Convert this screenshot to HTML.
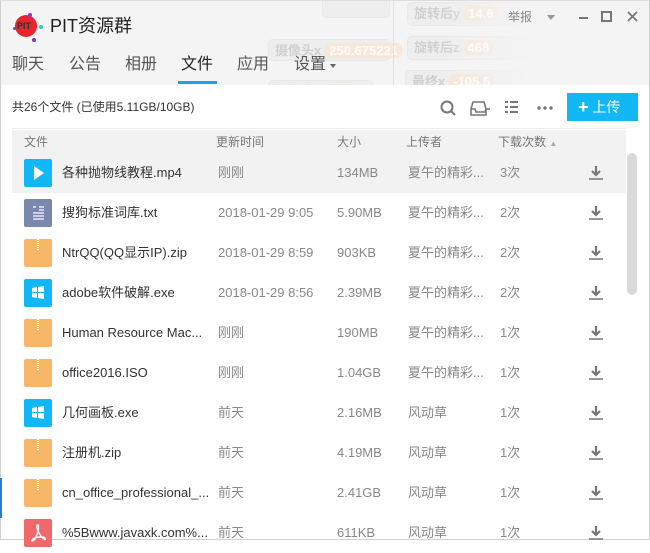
<!DOCTYPE html>
<html><head><meta charset="utf-8"><style>
*{margin:0;padding:0;box-sizing:border-box}
body{width:650px;height:540px;overflow:hidden;background:#fff;font-family:"Liberation Sans","Noto Sans CJK SC",sans-serif;position:relative}
.top{position:absolute;left:0;top:0;width:650px;height:85px;background:#f4f4f4;overflow:hidden}
.fb{position:absolute;background:#eeeeee;border:1px solid #e8e8e8;border-radius:5px;color:#d0d0d0;font-size:13px;font-weight:bold;padding:3px 6px;line-height:16px;white-space:nowrap}
.fb span{background:#f8e6d6;color:#fff;border-radius:6px;padding:0 4px;margin-left:4px}
.abs{position:absolute}
.tab{position:absolute;top:54px;font-size:16px;color:#555;line-height:22px}
.row{position:absolute;left:12px;width:614px;height:40px;font-size:13px;color:#888}
.row div{position:absolute;top:12px;white-space:nowrap;line-height:16px}
.row .ic{position:absolute;left:12px;top:6px;width:28px;height:28px;border-radius:2px}
.row svg.dl{position:absolute;left:576px;top:13px;width:16px;height:14px}
.zip{background:#f8b668}
.zip:after{content:"";position:absolute;left:13px;top:0;width:2px;height:12px;background:repeating-linear-gradient(#fff 0 1px,transparent 1px 2px)}
.nm{left:50px;color:#333}
.tm{left:206px}.sz{left:325px}.up{left:396px}.dc{left:488px}
</style></head><body>
<div class="top">
 <div class="fb" style="left:322px;top:-8px;width:68px;height:26px"></div>
 <div class="fb" style="left:268px;top:39px;width:122px;height:22px">摄像头x<span>250.675221</span></div>
 <div class="fb" style="left:268px;top:80px;width:105px;height:22px">摄像头y<span>370</span></div>
 <div class="fb" style="left:407px;top:2px;width:120px;height:24px">旋转后y<span>14.6</span></div>
 <div class="fb" style="left:407px;top:36px;width:120px;height:24px">旋转后z<span>468</span></div>
 <div class="fb" style="left:405px;top:70px;width:120px;height:24px">最终x<span>-105.5</span></div>
 <div class="abs" style="left:393px;top:0;width:1px;height:85px;background:#e2e2e2"></div>
 <div class="abs" style="left:440px;top:0;width:210px;height:85px;background:linear-gradient(90deg,rgba(244,244,244,0),#f4f4f4 45%)"></div>
</div>
<div class="abs" style="left:0;top:0;width:650px;height:540px;border:1px solid #cfcfcf;border-top-color:#ddd"></div>
<!-- logo -->
<div class="abs" style="left:15px;top:15px;width:22px;height:22px;border-radius:50%;background:#e8242c"></div>
<div class="abs" style="left:17px;top:21px;font-size:9px;font-weight:bold;color:#333;line-height:10px">PIT</div>
<div class="abs" style="left:28px;top:13px;width:4px;height:4px;border-radius:50%;background:#8a35d0"></div>
<div class="abs" style="left:39px;top:25px;width:4px;height:4px;border-radius:50%;background:#2ed0b0"></div>
<div class="abs" style="left:32px;top:38px;width:4px;height:4px;border-radius:50%;background:#7a3ac0"></div>
<div class="abs" style="left:13px;top:27px;width:3px;height:3px;border-radius:50%;background:#5050c0"></div>
<div class="abs" style="left:50px;top:15px;font-size:18px;color:#222;line-height:22px">PIT资源群</div>
<div class="abs" style="left:508px;top:9px;font-size:12px;color:#888;line-height:16px">举报</div>
<div class="abs" style="left:547px;top:15px;width:0;height:0;border:4px solid transparent;border-top:5px solid #999"></div>
<div class="abs" style="left:579px;top:17px;width:9px;height:2px;background:#777"></div>
<div class="abs" style="left:601px;top:11px;width:11px;height:11px;border:2px solid #777"></div>
<svg class="abs" style="left:627px;top:11px" width="11" height="11"><path d="M1 1l9 9M10 1l-9 9" stroke="#777" stroke-width="1.8"/></svg>
<div class="tab" style="left:12px">聊天</div>
<div class="tab" style="left:69px">公告</div>
<div class="tab" style="left:125px">相册</div>
<div class="tab" style="left:181px;color:#222">文件</div>
<div class="tab" style="left:237px">应用</div>
<div class="tab" style="left:294px">设置</div>
<div class="abs" style="left:330px;top:64px;border:3px solid transparent;border-top:4px solid #666"></div>
<div class="abs" style="left:178px;top:81px;width:39px;height:3px;background:#1aa3e8"></div>
<div class="abs" style="left:12px;top:99px;font-size:12px;color:#333;line-height:16px">共26个文件 (已使用5.11GB/10GB)</div>
<svg class="abs" style="left:438px;top:98px" width="130" height="20" viewBox="0 0 130 20">
 <circle cx="9" cy="9" r="5.5" fill="none" stroke="#777" stroke-width="2"/><path d="M13 13l4 4" stroke="#777" stroke-width="2"/>
 <path d="M35 4h11l2 7v6H33v-6z M33 11h4l1 3h9l1-3h4" fill="none" stroke="#777" stroke-width="1.6"/>
 <path d="M67 4h3M72 4h8M67 9h3M72 9h8M67 14h3M72 14h8" stroke="#777" stroke-width="2"/>
 <circle cx="101" cy="10" r="1.7" fill="#777"/><circle cx="107" cy="10" r="1.7" fill="#777"/><circle cx="113" cy="10" r="1.7" fill="#777"/>
</svg>
<div class="abs" style="left:567px;top:93px;width:71px;height:28px;background:#12b7f5;color:#fff;font-size:14px;line-height:28px;padding-left:11px"><b style="font-size:18px;vertical-align:-1px">+</b> 上传</div>
<div class="abs" style="left:12px;top:128px;width:614px;height:1px;background:#eee"></div>
<div class="abs" style="left:12px;top:130px;width:614px;height:23px;background:#f2f2f2;font-size:12px;color:#777;line-height:16px">
 <span class="abs" style="left:12px;top:4px">文件</span><span class="abs" style="left:204px;top:4px">更新时间</span><span class="abs" style="left:325px;top:4px">大小</span><span class="abs" style="left:394px;top:4px">上传者</span><span class="abs" style="left:486px;top:4px">下载次数 <span style="font-size:8px;color:#aaa">▲</span></span>
</div>
<div class="abs" style="left:627px;top:153px;width:10px;height:142px;border-radius:5px;background:#d9d9d9"></div>

<div class="row" style="top:153px;background:#f2f2f2"><div class="ic" style="background:#12b7f5"><svg width="28" height="28"><path d="M10 7l10 7-10 7z" fill="#fff"/></svg></div><div class="nm">各种抛物线教程.mp4</div><div class="tm">刚刚</div><div class="sz">134MB</div><div class="up">夏午的精彩...</div><div class="dc">3次</div><svg class="dl" viewBox="0 0 16 14"><path d="M8 0v8M4 5l4 4 4-4" stroke="#777" stroke-width="2.2" fill="none"/><path d="M1 13h14" stroke="#777" stroke-width="1.5"/></svg></div>
<div class="row" style="top:193px"><div class="ic" style="background:#7a88ad"><svg width="28" height="28"><path d="M9 8h3M15 8h5M15 11h5M9 14h11M9 17h11M9 20h11" stroke="#fff" stroke-width="1.3"/></svg></div><div class="nm">搜狗标准词库.txt</div><div class="tm">2018-01-29 9:05</div><div class="sz">5.90MB</div><div class="up">夏午的精彩...</div><div class="dc">2次</div><svg class="dl" viewBox="0 0 16 14"><path d="M8 0v8M4 5l4 4 4-4" stroke="#777" stroke-width="2.2" fill="none"/><path d="M1 13h14" stroke="#777" stroke-width="1.5"/></svg></div>
<div class="row" style="top:233px"><div class="ic zip"></div><div class="nm">NtrQQ(QQ显示IP).zip</div><div class="tm">2018-01-29 8:59</div><div class="sz">903KB</div><div class="up">夏午的精彩...</div><div class="dc">2次</div><svg class="dl" viewBox="0 0 16 14"><path d="M8 0v8M4 5l4 4 4-4" stroke="#777" stroke-width="2.2" fill="none"/><path d="M1 13h14" stroke="#777" stroke-width="1.5"/></svg></div>
<div class="row" style="top:273px"><div class="ic" style="background:#12b7f5"><svg width="28" height="28"><path d="M8 9l5-1v5H8zM14 8l6-1v6h-6zM8 14h5v5l-5-1zM14 14h6v6l-6-1z" fill="#fff"/></svg></div><div class="nm">adobe软件破解.exe</div><div class="tm">2018-01-29 8:56</div><div class="sz">2.39MB</div><div class="up">夏午的精彩...</div><div class="dc">2次</div><svg class="dl" viewBox="0 0 16 14"><path d="M8 0v8M4 5l4 4 4-4" stroke="#777" stroke-width="2.2" fill="none"/><path d="M1 13h14" stroke="#777" stroke-width="1.5"/></svg></div>
<div class="row" style="top:313px"><div class="ic zip"></div><div class="nm">Human Resource Mac...</div><div class="tm">刚刚</div><div class="sz">190MB</div><div class="up">夏午的精彩...</div><div class="dc">1次</div><svg class="dl" viewBox="0 0 16 14"><path d="M8 0v8M4 5l4 4 4-4" stroke="#777" stroke-width="2.2" fill="none"/><path d="M1 13h14" stroke="#777" stroke-width="1.5"/></svg></div>
<div class="row" style="top:353px"><div class="ic zip"></div><div class="nm">office2016.ISO</div><div class="tm">刚刚</div><div class="sz">1.04GB</div><div class="up">夏午的精彩...</div><div class="dc">1次</div><svg class="dl" viewBox="0 0 16 14"><path d="M8 0v8M4 5l4 4 4-4" stroke="#777" stroke-width="2.2" fill="none"/><path d="M1 13h14" stroke="#777" stroke-width="1.5"/></svg></div>
<div class="row" style="top:393px"><div class="ic" style="background:#12b7f5"><svg width="28" height="28"><path d="M8 9l5-1v5H8zM14 8l6-1v6h-6zM8 14h5v5l-5-1zM14 14h6v6l-6-1z" fill="#fff"/></svg></div><div class="nm">几何画板.exe</div><div class="tm">前天</div><div class="sz">2.16MB</div><div class="up">风动草</div><div class="dc">1次</div><svg class="dl" viewBox="0 0 16 14"><path d="M8 0v8M4 5l4 4 4-4" stroke="#777" stroke-width="2.2" fill="none"/><path d="M1 13h14" stroke="#777" stroke-width="1.5"/></svg></div>
<div class="row" style="top:433px"><div class="ic zip"></div><div class="nm">注册机.zip</div><div class="tm">前天</div><div class="sz">4.19MB</div><div class="up">风动草</div><div class="dc">1次</div><svg class="dl" viewBox="0 0 16 14"><path d="M8 0v8M4 5l4 4 4-4" stroke="#777" stroke-width="2.2" fill="none"/><path d="M1 13h14" stroke="#777" stroke-width="1.5"/></svg></div>
<div class="row" style="top:473px"><div class="ic zip"></div><div class="nm">cn_office_professional_...</div><div class="tm">前天</div><div class="sz">2.41GB</div><div class="up">风动草</div><div class="dc">1次</div><svg class="dl" viewBox="0 0 16 14"><path d="M8 0v8M4 5l4 4 4-4" stroke="#777" stroke-width="2.2" fill="none"/><path d="M1 13h14" stroke="#777" stroke-width="1.5"/></svg></div>
<div class="row" style="top:513px"><div class="ic" style="background:#f0686a"><svg width="28" height="28"><path d="M14 6c-2 0-1 6 3 11s5 4 4 2-9-1-12 1 0 4 3-2 3-12 2-12z" fill="none" stroke="#fff" stroke-width="1.4"/></svg></div><div class="nm">%5Bwww.javaxk.com%...</div><div class="tm">前天</div><div class="sz">611KB</div><div class="up">风动草</div><div class="dc">1次</div><svg class="dl" viewBox="0 0 16 14"><path d="M8 0v8M4 5l4 4 4-4" stroke="#777" stroke-width="2.2" fill="none"/><path d="M1 13h14" stroke="#777" stroke-width="1.5"/></svg></div>
<div class="abs" style="left:0;top:478px;width:2px;height:40px;background:#2b7bd8"></div>
</body></html>
